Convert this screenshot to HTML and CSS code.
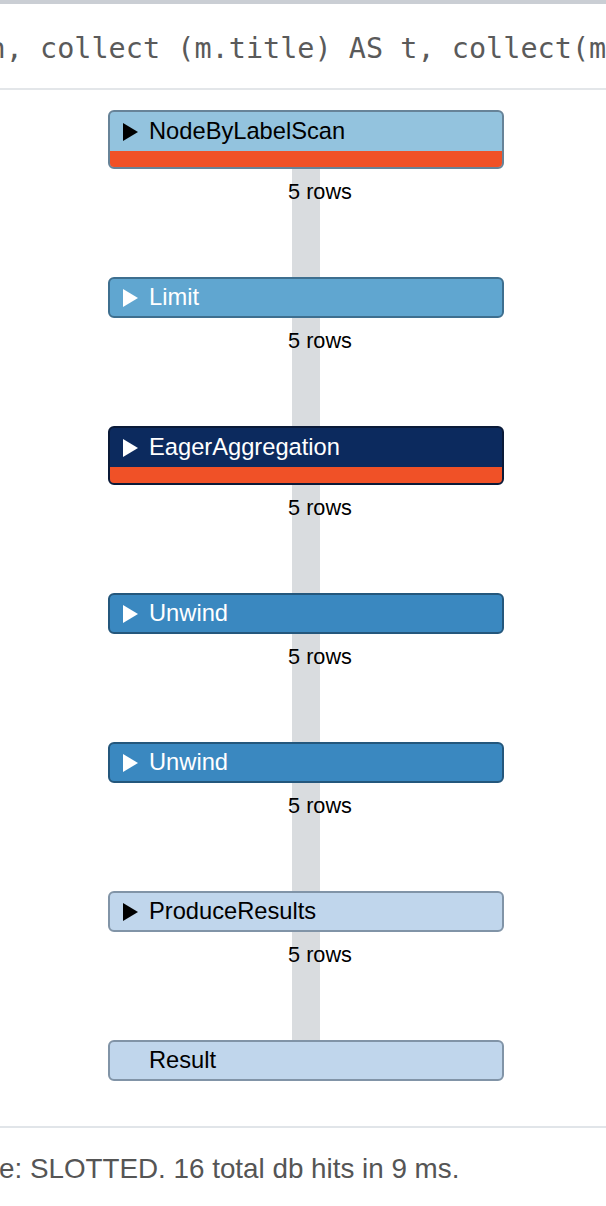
FILE: index.html
```html
<!DOCTYPE html>
<html>
<head>
<meta charset="utf-8">
<link rel="stylesheet" href="styles.css">
</head>
<body>
<div class="topbar"></div>
<div class="query"><span class="query-text">n, collect (m.title) AS t, collect(m.released) AS r</span></div>
<div class="plan">
  <div class="node node-scan has-bar">
    <div class="node-head"><svg class="tri" viewBox="0 0 15 18"><polygon points="0,0 15,9 0,18"/></svg><span>NodeByLabelScan</span></div>
    <div class="node-bar"></div>
  </div>
  <div class="link"><div class="pipe"></div><div class="rows">5 rows</div></div>
  <div class="node node-limit">
    <div class="node-head"><svg class="tri" viewBox="0 0 15 18"><polygon points="0,0 15,9 0,18"/></svg><span>Limit</span></div>
  </div>
  <div class="link"><div class="pipe"></div><div class="rows">5 rows</div></div>
  <div class="node node-eager has-bar">
    <div class="node-head"><svg class="tri" viewBox="0 0 15 18"><polygon points="0,0 15,9 0,18"/></svg><span>EagerAggregation</span></div>
    <div class="node-bar"></div>
  </div>
  <div class="link"><div class="pipe"></div><div class="rows">5 rows</div></div>
  <div class="node node-unwind">
    <div class="node-head"><svg class="tri" viewBox="0 0 15 18"><polygon points="0,0 15,9 0,18"/></svg><span>Unwind</span></div>
  </div>
  <div class="link"><div class="pipe"></div><div class="rows">5 rows</div></div>
  <div class="node node-unwind">
    <div class="node-head"><svg class="tri" viewBox="0 0 15 18"><polygon points="0,0 15,9 0,18"/></svg><span>Unwind</span></div>
  </div>
  <div class="link"><div class="pipe"></div><div class="rows">5 rows</div></div>
  <div class="node node-light">
    <div class="node-head"><svg class="tri" viewBox="0 0 15 18"><polygon points="0,0 15,9 0,18"/></svg><span>ProduceResults</span></div>
  </div>
  <div class="link"><div class="pipe"></div><div class="rows">5 rows</div></div>
  <div class="node node-light">
    <div class="node-head"><span class="no-tri"></span><span>Result</span></div>
  </div>
</div>
<div class="footer"><span class="footer-text">e: SLOTTED. 16 total db hits in 9 ms.</span></div>
</body>
</html>
```

FILE: styles.css
```css
* { box-sizing: border-box; }
html, body {
  margin: 0;
  padding: 0;
  background: #ffffff;
  width: 606px;
  overflow: hidden;
}
body {
  font-family: "Liberation Sans", Arial, sans-serif;
  color: #000;
}
.topbar {
  height: 4px;
  background: #caced4;
}
.query {
  height: 86px;
  border-bottom: 2px solid #e3e6e9;
  display: flex;
  align-items: center;
  overflow: hidden;
  white-space: nowrap;
}
.query-text {
  font-family: "DejaVu Sans Mono", monospace;
  font-size: 28.5px;
  color: #5a5a5a;
  margin-left: -11.5px;
  margin-top: 4px;
}
.plan {
  padding: 20px 0 0 108px;
  height: 1036px;
  display: flex;
  flex-direction: column;
  align-items: flex-start;
}
.node {
  width: 396px;
  border: 2px solid #7a8fa2;
  border-radius: 6px;
  overflow: hidden;
  flex: none;
}
.node-head {
  height: 37px;
  display: flex;
  align-items: center;
  padding-left: 13px;
  font-size: 23.7px;
  line-height: 1;
}
.has-bar .node-head {
  height: 39px;
}
.node-bar {
  height: 16px;
  background: #f05127;
}
.tri {
  width: 15px;
  height: 18px;
  margin-right: 11px;
  flex: none;
}
.no-tri {
  width: 26px;
  flex: none;
}
.node-scan { background: #93c3de; border-color: #678398; }
.node-scan .tri polygon { fill: #000; }
.node-limit { background: #60a6d0; border-color: #3e6f8f; color: #fff; }
.node-limit .tri polygon { fill: #fff; }
.node-eager { background: #0c2a5e; border-color: #0a1a38; color: #fff; }
.node-eager .tri polygon { fill: #fff; }
.node-unwind { background: #3a88c0; border-color: #24577c; color: #fff; }
.node-unwind .tri polygon { fill: #fff; }
.node-light { background: #c0d6ec; border-color: #8194a7; color: #000; }
.node-light .tri polygon { fill: #000; }
.link {
  width: 396px;
  height: 108px;
  display: grid;
  flex: none;
}
.pipe {
  grid-area: 1 / 1;
  justify-self: center;
  width: 28px;
  height: 100%;
  background: #d9dcdf;
}
.rows {
  grid-area: 1 / 1;
  justify-self: center;
  align-self: start;
  margin-top: 10px;
  margin-left: 28px;
  font-size: 21.7px;
  line-height: 26px;
  color: #000;
}
.footer {
  border-top: 2px solid #e1e5e9;
  height: 82px;
  display: flex;
  align-items: center;
  overflow: hidden;
  white-space: nowrap;
}
.footer-text {
  font-size: 27.8px;
  color: #555555;
  margin-left: -1px;
  margin-top: 2px;
}
```
